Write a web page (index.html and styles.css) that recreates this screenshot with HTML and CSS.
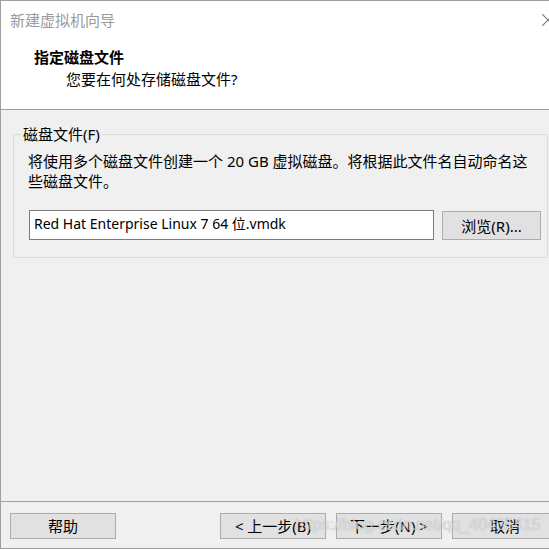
FILE: index.html
```html
<!DOCTYPE html>
<html lang="zh-CN">
<head>
    <meta charset="UTF-8">
    <meta name="viewport" content="width=device-width, initial-scale=1.0">
    <title>新建虚拟机向导</title>
    <link rel="stylesheet" href="styles.css">
</head>
<body>

    <div class="window">

        <!-- Title bar + page heading -->
        <div class="header">
            <div class="titlebar">
                <span class="title">新建虚拟机向导</span>
                <svg class="close" width="12" height="12" viewBox="0 0 12 12">
                    <path d="M0 0 L12 12 M0 12 L12 0" stroke="#7a7a7a" stroke-width="1.2" fill="none"/>
                </svg>
            </div>
            <div class="heading">
                <h1>指定磁盘文件</h1>
                <p>您要在何处存储磁盘文件?</p>
            </div>
        </div>

        <!-- Disk file group -->
        <div class="content">
            <fieldset class="group">
                <legend>磁盘文件(F)</legend>
                <div class="group-body">
                    <p class="desc">将使用多个磁盘文件创建一个 20 GB 虚拟磁盘。将根据此文件名自动命名这些磁盘文件。</p>
                    <div class="file-row">
                        <input type="text" class="file-input" value="Red Hat Enterprise Linux 7 64 位.vmdk">
                        <button class="btn browse">浏览(R)...</button>
                    </div>
                </div>
            </fieldset>
        </div>

        <!-- Wizard buttons -->
        <div class="footer">
            <button class="btn">帮助</button>
            <button class="btn back">&lt; 上一步(B)</button>
            <button class="btn next">下一步(N) &gt;</button>
            <button class="btn cancel">取消</button>
        </div>

        <div class="watermark">https://blog.csdn.net/qq_40435415</div>
    </div>

</body>
</html>
```

FILE: styles.css
```css
body {
    margin: 0;
    padding: 0;
    overflow: hidden;
    font-family: "Noto Sans", "Noto Sans CJK SC", sans-serif;
    font-size: 15px;
    color: #000;
    background-color: #ffffff;
}

/* Dialog frame */
.window {
    position: relative;
    width: 561px;
    height: 549px;
    box-sizing: border-box;
    border: 1px solid #a0a0a0;
    background-color: #f0f0f0;
    display: flex;
    flex-direction: column;
}

/* Header */
.header {
    background-color: #ffffff;
    height: 109px;
    box-sizing: border-box;
    border-bottom: 1px solid #a0a0a0;
}
.titlebar {
    height: 38px;
    display: flex;
    align-items: center;
    padding-left: 9px;
}
.title {
    color: #9a9a9a;
    line-height: 20px;
}
.close {
    flex-shrink: 0;
    margin-left: auto;
    margin-right: 6px;
}
.heading {
    padding-top: 7px;
}
.heading h1 {
    margin: 0 0 0 33px;
    font-size: 15px;
    font-weight: bold;
    line-height: 22px;
}
.heading p {
    margin: 0 0 0 65px;
    line-height: 22px;
}

/* Group box */
.content {
    flex: 1;
    padding: 15px 12px 0 12px;
}
.group {
    margin: 0;
    padding: 0;
    border: 1px solid #dcdcdc;
    min-width: 0;
}
.group legend {
    margin-left: 7px;
    padding: 0 2px;
    line-height: 18px;
}
.group-body {
    padding: 8px 13px 17px 14px;
}
.desc {
    margin: 0;
    line-height: 20px;
}
.file-row {
    display: flex;
    align-items: flex-end;
    margin-top: 19px;
}
.file-input {
    flex-shrink: 0;
    width: 405px;
    height: 30px;
    box-sizing: border-box;
    margin: 0 0 0 1px;
    padding: 0 4px 4px 4px;
    border: 1px solid #7a7a7a;
    font-family: inherit;
    font-size: 14px;
    color: #000;
    background-color: #ffffff;
    outline: none;
}

/* Buttons */
.btn {
    flex-shrink: 0;
    width: 106px;
    height: 26px;
    margin: 0;
    padding: 0;
    border: 1px solid #adadad;
    background-color: #e1e1e1;
    font-family: inherit;
    font-size: 15px;
    color: #000;
    line-height: 22px;
}
.browse {
    width: 99px;
    height: 29px;
    margin-left: 8px;
}

.footer {
    display: flex;
    border-top: 1px solid #a0a0a0;
    padding: 11px 0 9px 9px;
}
.back {
    margin-left: 104px;
}
.next {
    margin-left: 10px;
}
.cancel {
    margin-left: 10px;
}

/* Screenshot watermark */
.watermark {
    position: absolute;
    left: 294px;
    top: 515px;
    font-family: "Liberation Sans", Arial, sans-serif;
    font-size: 16px;
    color: rgba(255, 255, 255, 0.6);
    text-shadow: 0 0 1px rgba(110, 110, 110, 0.6);
    white-space: nowrap;
    pointer-events: none;
}
```
